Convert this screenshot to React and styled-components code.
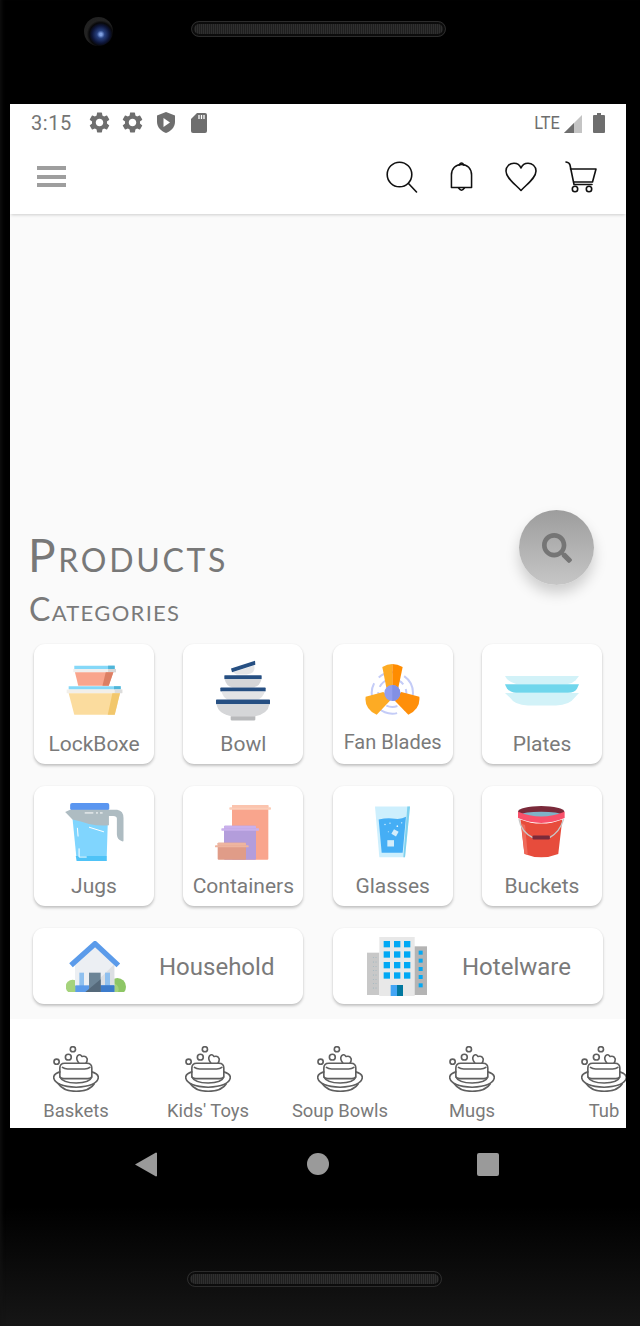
import React from 'react';
import styled, { createGlobalStyle } from 'styled-components';
import { MdSettings } from 'react-icons/md';
import { FaSearch } from 'react-icons/fa';

const Global = createGlobalStyle`
  html, body { margin: 0; padding: 0; background: #000; }
  * { box-sizing: border-box; }
`;

const Phone = styled.div`
  width: 640px; height: 1326px; display: flex; flex-direction: column;
  background: linear-gradient(180deg, #000 0 91%, #161616 100%);
  overflow: hidden; font-family: Roboto, "Liberation Sans", sans-serif;
  box-shadow: inset 4px 0 4px -3px #141414;
`;
const TopBezel = styled.div`
  height: 104px; flex: none; display: flex; align-items: flex-start; padding: 17px 0 0 84px; gap: 78px;
`;
const Camera = styled.div`
  width: 29px; height: 29px; border-radius: 50%;
  background: radial-gradient(circle at 58% 60%, #7f9fe0 0 5%, #27407f 16%, #0d1538 36%, #08080a 48%, #222 58%, #1f1f1f 100%);
`;
const Speaker = styled.div`
  width: 255px; height: 16px; border-radius: 8px; margin-top: ${p => p.$top || 0}px; border: 1px solid #2c2c2c;
  background: repeating-linear-gradient(90deg, #1f1f1f 0 1px, #2f2f2f 1px 2px);
  box-shadow: inset 0 0 0 2px #0c0c0c;
`;
const Screen = styled.div`
  width: 616px; height: 1024px; flex: none; margin-left: 10px; display: flex; flex-direction: column; background: #fafafa; overflow: hidden;
`;
const StatusBar = styled.div`
  height: 39px; flex: none; background: #fff; display: flex; align-items: center; padding: 0 21px 2px; color: #6e6e6e;
`;
const Clock = styled.span`
  font-size: 20px; width: 42px; letter-spacing: .6px; line-height: 1; margin-right: 14px; color: #757575;
`;
const StatusIcons = styled.div`
  display: flex; align-items: center; gap: ${p => p.$gap || 0}px;
`;
const Nudge = styled.span`
  display: flex; margin-left: ${p => p.$left}px;
`;
const Net = styled.span`
  font-size: 19px; margin-left: auto; margin-right: 4px; transform: scaleX(.86); transform-origin: right; color: #6e6e6e;
`;
const Header = styled.header`
  height: 71px; flex: none; background: #fff; display: flex; align-items: center; padding: 0 29px 4px 27px;
  box-shadow: 0 2px 3px -1px rgba(0,0,0,.18); position: relative; z-index: 2;
`;
const Burger = styled.div`
  width: 29px; display: flex; flex-direction: column; gap: 4.5px; margin-right: auto;
  & > i { display: block; height: 4px; background: #9e9e9e; }
`;
const HeaderIcons = styled.div`
  display: flex; align-items: center; gap: 0;
`;
const HeaderSlot = styled.div`
  width: ${p => p.$w}px; display: flex; justify-content: flex-start;
`;
const Main = styled.main`
  flex: 1; position: relative; background: #fafafa; padding: 319px 23px 15px;
`;
const Title = styled.h1`
  margin: 0 0 0 -5px; font: 400 46px/44px Lato, sans-serif; font-variant: small-caps; color: #787878; letter-spacing: 2.7px;
`;
const Subtitle = styled.h2`
  margin: 15px 0 18px -4px; font: 400 32px/34px Lato, sans-serif; font-variant: small-caps; color: #7a7a7a; letter-spacing: 1.3px;
`;
const Grid = styled.div`
  display: flex; flex-wrap: wrap; justify-content: space-between; row-gap: 22px; padding-left: 1px; width: 569px;
`;
const cardSurface = `background:#fff; border-radius: 11px; box-shadow: 0 2px 3px rgba(0,0,0,.22), 0 0 2px rgba(0,0,0,.05);`;
const Card = styled.div`
  ${cardSurface}
  width: 120px; height: 120px; display: flex; flex-direction: column; align-items: center;
`;
const IconSlot = styled.div`
  height: 88px; padding-top: 4px; display: flex; align-items: center; justify-content: center; flex: none; width: 100%;
`;
const CardLabel = styled.div`
  height: 24px; font-size: ${p => p.$compact ? 20 : 21}px; line-height: 24px; color: #7a7a7a; white-space: nowrap;
  margin-top: ${p => p.$compact ? -2 : 0}px;
`;
const WideRow = styled.div`
  display: flex; gap: 30px; margin-top: 22px;
`;
const WideCard = styled.div`
  ${cardSurface}
  width: 270px; height: 76px; display: flex; align-items: center; padding-left: ${p => p.$pad}px;
`;
const WideLabel = styled.div`
  font-size: 24px; color: #7a7a7a; margin: 2px 0 0 ${p => p.$gap}px; white-space: nowrap;
`;
const Fab = styled.button`
  position: absolute; left: 509px; top: 296px; width: 75px; height: 75px; border: 0; border-radius: 50%; padding: 0;
  background: linear-gradient(180deg, #9d9d9d, #c6c6c6); color: #757575;
  box-shadow: 0 8px 14px rgba(0,0,0,.18); display: flex; align-items: center; justify-content: center;
`;
const Shelf = styled.nav`
  height: 109px; flex: none; background: #fff; display: flex; overflow: hidden;
`;
const ShelfItem = styled.div`
  width: 132px; flex: none; display: flex; flex-direction: column; align-items: center; padding-top: 27px;
`;
const ShelfLabel = styled.div`
  font-size: 18.4px; line-height: 20px; margin-top: 9px; color: #7a7a7a; white-space: nowrap;
`;
const NavBar = styled.div`
  height: 72px; flex: none; display: flex; align-items: center; padding-left: 135px;
`;
const NavCircle = styled.div`
  width: 22px; height: 22px; border-radius: 50%; background: #9a9a9a; margin-left: 150px; flex: none;
`;
const NavSquare = styled.div`
  width: 22px; height: 23px; border-radius: 2px; background: #9a9a9a; margin-left: 148px; flex: none;
`;
const BottomBezel = styled.div`
  flex: 1; padding: 71px 0 0 187px;
`;

const Back = () => (
  <svg width="22" height="25" viewBox="0 0 22 25"><path d="M21 0.5 L22 1 V24 L21 24.5 L0 12.5 Z" fill="#9a9a9a" /></svg>
);

const Shield = () => (
  <svg width="18" height="21" viewBox="0 0 18 21">
    <path d="M9 0 L18 3.5 V10 C18 15 14 19 9 21 C4 19 0 15 0 10 V3.5 Z" fill="#6e6e6e" />
    <path d="M6.5 6 L13 10.5 L6.5 15 Z" fill="#fff" />
  </svg>
);
const Sd = () => (
  <svg width="16" height="20" viewBox="0 0 16 20">
    <path d="M6 0 H14 Q16 0 16 2 V18 Q16 20 14 20 H2 Q0 20 0 18 V6 Z" fill="#6e6e6e" />
    <path d="M8 2 V6 M10.5 2 V6 M13 2 V6" stroke="#fff" strokeWidth="1.3" />
  </svg>
);
const Signal = () => (
  <svg width="18" height="18" viewBox="0 0 18 18" style={{ marginTop: 2 }}>
    <path d="M18 0 V18 H0 Z" fill="#c4c4c4" />
    <path d="M10 8 V18 H0 Z" fill="#6e6e6e" />
  </svg>
);
const Battery = () => (
  <svg width="12" height="20" viewBox="0 0 12 20">
    <path d="M4 0 H8 V2 H11 Q12 2 12 3 V19 Q12 20 11 20 H1 Q0 20 0 19 V3 Q0 2 1 2 H4 Z" fill="#6e6e6e" />
  </svg>
);

const line = { fill: 'none', stroke: '#111', strokeWidth: 1.6, strokeLinecap: 'round', strokeLinejoin: 'round' };
const SearchLine = () => (
  <svg width="32" height="32" viewBox="0 0 32 32" {...line}>
    <circle cx="13.5" cy="13.5" r="12.3" /><path d="M22.5 22.5 L30.5 31" />
  </svg>
);
const Bell = () => (
  <svg width="23" height="32" viewBox="0 0 24 32" {...line}>
    <path d="M1.5 27 V14 C1.5 7 6 3 12 3 C18 3 22.5 7 22.5 14 V27 Z" />
    <path d="M9.5 3.5 Q12 -0.5 14.5 3.5 M9 27.5 Q12 32 15 27.5" />
  </svg>
);
const Heart = () => (
  <svg width="32" height="30" viewBox="0 0 32 30" {...line}>
    <path d="M16 28.5 C10 22 1 16 1 9 C1 4 5 1.2 9 1.2 C12 1.2 14.8 3 16 6 C17.2 3 20 1.2 23 1.2 C27 1.2 31 4 31 9 C31 16 22 22 16 28.5 Z" />
  </svg>
);
const Cart = () => (
  <svg width="32" height="32" viewBox="0 0 32 32" {...line}>
    <path d="M1 1 Q4.5 1.5 5 4 L9 23.5 H27" />
    <path d="M5.5 8 H31 L27.5 21 H9" />
    <circle cx="10" cy="28" r="2.7" /><circle cx="24" cy="28" r="2.7" />
  </svg>
);

const LockBox = () => (
  <svg width="57" height="51" viewBox="135 495 172 154">
    <path d="M160 497 H282 V507 H160 Z" fill="#85d8f8" /><path d="M262 497 H282 V507 H262 Z" fill="#50b5d8" />
    <path d="M157 507 H286 V517 H157 Z" fill="#efefef" /><path d="M262 507 H286 V517 H262 Z" fill="#d6d6d6" />
    <path d="M162 517 H278 L264 558 H172 Z" fill="#f9a58d" /><path d="M255 517 H278 L264 558 H245 Z" fill="#dc7f64" />
    <path d="M143 559 H300 V569 H143 Z" fill="#85d8f8" /><path d="M280 559 H300 V569 H280 Z" fill="#50b5d8" />
    <path d="M137 569 H305 V580 H137 Z" fill="#f2efe9" /><path d="M282 569 H305 V580 H282 Z" fill="#dcdcdc" />
    <path d="M143 580 H298 L282 645 H160 Z" fill="#fbdc9e" /><path d="M275 580 H298 L282 645 H261 Z" fill="#f2c76c" />
  </svg>
);
const Bowl = () => (
  <svg width="54" height="61" viewBox="588 480 162 182">
    <path d="M638 516 L703 496 Q708 520 680 523 H650 Z" fill="#e4e5e7" />
    <path d="M633 505 L705 482 L706 494 L636 516 Z" fill="#264f82" />
    <rect x="613" y="525" width="112" height="12" rx="2" fill="#264f82" />
    <path d="M614 537 H724 Q720 558 700 562 H638 Q618 558 614 537" fill="#d5d6d8" />
    <rect x="601" y="562" width="136" height="12" rx="2" fill="#264f82" />
    <path d="M604 574 H735 Q728 592 715 598 H622 Q610 592 604 574" fill="#e3e4e6" />
    <rect x="588" y="598" width="162" height="14" rx="2" fill="#264f82" />
    <path d="M590 612 H748 Q745 640 705 648 H635 Q593 640 590 612" fill="#d5d6d8" />
    <path d="M632 648 H706 V658 Q706 661 702 661 H636 Q632 661 632 658 Z" fill="#b8b9bb" />
  </svg>
);
const Fan = () => (
  <svg width="55" height="52" viewBox="135 494 165 156">
    <g fill="none" stroke="#c4ccf7" strokeWidth="6">
      <circle cx="217" cy="581" r="62" strokeDasharray="60 22" />
      <circle cx="217" cy="581" r="42" strokeDasharray="34 16" />
    </g>
    <path d="M187 503 Q202 494 217 494 V565 H199 Z" fill="#fdab24" />
    <path d="M248 503 Q232 494 217 494 V565 H235 Z" fill="#ff8c00" />
    <path d="M244 578 L298 592 Q302 628 265 646 L220 600 Z" fill="#ff8f0a" />
    <path d="M190 578 L137 592 Q132 628 170 646 L214 600 Z" fill="#fdab24" />
    <circle cx="217" cy="581" r="24" fill="#929eee" />
    <path d="M217 557 A24 24 0 0 1 217 605 Z" fill="#8290e4" />
  </svg>
);
const Plates = () => (
  <svg width="74" height="31" viewBox="557 525 221 91">
    <path d="M557 527 H778 L768 540 Q758 550 745 551 H590 Q565 545 557 527 Z" fill="#d2f2f8" />
    <path d="M557 552 H778 L772 565 Q765 577 745 577 H590 Q565 577 557 552 Z" fill="#70d6ec" />
    <path d="M557 578 H778 L762 595 Q750 613 710 615 H625 Q585 613 575 595 Z" fill="#d2f2f8" />
  </svg>
);
const Jug = () => (
  <svg width="59" height="59" viewBox="133 85 177 178">
    <rect x="148" y="85" width="118" height="22" rx="6" fill="#5a96f0" />
    <path d="M155 130 H262 L258 260 H168 Z" fill="#80d5fe" />
    <path d="M165 245 H258 V260 H168 Z" fill="#4fc3f7" />
    <path d="M133 112 L148 105 H290 Q309 108 309 130 V198 Q309 203 303 200 Q290 195 289 180 V132 Q289 124 278 124 H265 V152 Q235 155 205 148 Q180 140 155 135 Z" fill="#aebcc2" />
    <path d="M192 115 H218 M226 115 H232 M238 115 H246 M205 158 L250 172 M170 160 L172 186 M175 222 V248 H198" stroke="#fff" strokeWidth="3" fill="none" />
  </svg>
);
const Containers = () => (
  <svg width="56" height="55" viewBox="585 91 168 165">
    <rect x="636" y="91" width="109" height="164" rx="3" fill="#f9a58d" />
    <rect x="636" y="91" width="109" height="7" fill="#fbc4ae" />
    <rect x="628" y="98" width="125" height="7" rx="2" fill="#fbcdb8" />
    <rect x="612" y="153" width="96" height="102" rx="3" fill="#b39ddb" />
    <rect x="612" y="153" width="96" height="8" rx="2" fill="#c9b0ec" />
    <rect x="604" y="161" width="113" height="7" rx="2" fill="#c9b0ec" />
    <rect x="593" y="204" width="85" height="51" rx="3" fill="#e09c88" />
    <rect x="593" y="204" width="85" height="8" rx="2" fill="#eeb5a0" />
    <rect x="585" y="212" width="101" height="6" rx="2" fill="#eeb5a0" />
  </svg>
);
const Glass = () => (
  <svg width="35" height="52" viewBox="165 95 105 155">
    <path d="M165 96 H270 L255 248 H178 Z" fill="#cdeffd" />
    <path d="M262 96 H270 L255 248 H250 Z" fill="#7fd1ee" />
    <path d="M176 135 Q205 128 225 133 Q245 135 258 127 L248 235 H185 Z" fill="#45aef5" />
    <rect x="202" y="197" width="20" height="19" fill="#d3edfb" />
    <rect x="217" y="167" width="16" height="16" fill="#d3edfb" transform="rotate(30 225 175)" />
    <g fill="#e6f6ff"><circle cx="195" cy="150" r="2" /><circle cx="210" cy="146" r="2" /><circle cx="232" cy="155" r="2.5" /><circle cx="245" cy="145" r="2" /><circle cx="205" cy="172" r="1.5" /></g>
  </svg>
);
const Bucket = () => (
  <svg width="47" height="53" viewBox="597 95 140 158">
    <ellipse cx="666" cy="112" rx="69" ry="17" fill="#7a2a3a" />
    <ellipse cx="666" cy="121" rx="59" ry="9" fill="#7fb3c8" />
    <path d="M604 135 Q666 160 729 135 L717 238 Q666 258 616 238 Z" fill="#e74c3c" />
    <path d="M606 145 Q612 150 618 152 L626 240 L616 236 Z" fill="#ef6a5b" />
    <path d="M597 112 Q666 140 736 112 V131 Q666 160 597 131 Z" fill="#f9506a" />
    <path d="M600 134 Q606 172 642 190 M733 134 Q722 172 690 190" stroke="#c8c8c8" strokeWidth="4" fill="none" />
    <rect x="640" y="183" width="52" height="12" rx="4" fill="#7a2a3a" />
  </svg>
);
const House = () => (
  <svg width="60" height="51" viewBox="138 495 180 153">
    <defs><clipPath id="hb"><rect x="138" y="495" width="180" height="153" /></clipPath></defs>
    <g clipPath="url(#hb)">
      <circle cx="292" cy="632" r="26" fill="#8dc665" />
      <circle cx="158" cy="632" r="21" fill="#a5d37c" />
      <circle cx="278" cy="640" r="18" fill="#a5d37c" />
      <path d="M165 565 L225 512 L283 565 V630 H165 Z" fill="#eceff3" />
      <path d="M283 565 V630 H216 Z" fill="#dcdfe3" />
      <path d="M153 568 L225 503 L295 568" fill="none" stroke="#5b9bea" strokeWidth="16" strokeLinejoin="round" />
      <rect x="178" y="590" width="14" height="40" fill="#8fc0ef" />
      <rect x="255" y="590" width="15" height="40" fill="#8fc0ef" />
      <rect x="166" y="628" width="117" height="20" fill="#5b9bea" />
      <rect x="240" y="628" width="43" height="20" fill="#3c7bcb" />
      <path d="M207 590 H242 V648 H207 Z" fill="#6c8496" />
      <path d="M242 610 V648 H196 Z" fill="#55697a" />
    </g>
  </svg>
);
const Hotel = () => {
  const cols = [191, 222, 252];
  const rows = [495, 526, 558, 589];
  const side = [524, 548, 573, 597, 622];
  return (
    <svg width="60" height="59" viewBox="141 483 180 177">
      <rect x="141" y="530" width="37" height="127" fill="#c8c8c8" />
      {[160, 168].map(x => [545, 558, 571, 584, 597, 610, 623, 636].map(y => <circle key={`${x}-${y}`} cx={x} cy={y} r="1.3" fill="#7aa7b8" />))}
      <rect x="178" y="483" width="106" height="177" fill="#e8e8e8" />
      <rect x="284" y="511" width="37" height="146" fill="#b4b4b4" />
      {cols.map(x => rows.map(y => <rect key={`${x}:${y}`} x={x} y={y} width="19" height="19" fill="#03a9f4" />))}
      {side.map(y => <rect key={y} x="296" y={y} width="12" height="12" fill="#03a9f4" />)}
      <rect x="212" y="627" width="19" height="33" fill="#42a5f5" />
      <rect x="231" y="627" width="18" height="33" fill="#01789f" />
    </svg>
  );
};
const Soap = () => (
  <svg width="46" height="46" viewBox="71 31 141 144" preserveAspectRatio="none" fill="none" stroke="#5f5f5f" strokeWidth="5" strokeLinecap="round" strokeLinejoin="round">
    <circle cx="132" cy="41" r="8" />
    <circle cx="118" cy="66" r="9" />
    <circle cx="82" cy="80" r="8" />
    <path d="M150 84 Q140 70 146 62 Q154 54 160 64 Q172 60 176 72 Q176 80 172 85" />
    <path d="M92 125 V100 Q92 85 107 85 H175 Q190 85 190 100 V125 Q190 132 178 133 H104 Q92 132 92 125 Z" />
    <path d="M100 98 Q106 103 116 103 H168 Q178 103 184 98" />
    <path d="M92 112 Q73 118 73 130 Q78 157 142 160 Q206 157 210 130 Q210 118 190 112" />
    <path d="M88 150 Q102 172 142 173 Q184 172 197 150" />
    <path d="M92 128 Q100 146 142 147 Q184 146 190 128" />
  </svg>
);

const categories = [
  { label: 'LockBoxe', Art: LockBox }, { label: 'Bowl', Art: Bowl },
  { label: 'Fan Blades', Art: Fan, compact: true }, { label: 'Plates', Art: Plates },
  { label: 'Jugs', Art: Jug }, { label: 'Containers', Art: Containers },
  { label: 'Glasses', Art: Glass }, { label: 'Buckets', Art: Bucket },
];
const shelf = ['Baskets', "Kids' Toys", 'Soup Bowls', 'Mugs', 'Tub'];

export default function App() {
  return (
    <Phone>
      <Global />
      <TopBezel>
        <Camera />
        <Speaker $top={4} />
      </TopBezel>
      <Screen>
        <StatusBar>
          <Clock>3:15</Clock>
          <StatusIcons $gap={8}>
            <MdSettings size={25} />
            <MdSettings size={25} />
            <Nudge $left={4}><Shield /></Nudge>
            <Nudge $left={8}><Sd /></Nudge>
          </StatusIcons>
          <Net>LTE</Net>
          <StatusIcons $gap={11}>
            <Signal />
            <Battery />
          </StatusIcons>
        </StatusBar>
        <Header>
          <Burger><i /><i /><i /></Burger>
          <HeaderIcons>
            <HeaderSlot $w={64}><SearchLine /></HeaderSlot>
            <HeaderSlot $w={55}><Bell /></HeaderSlot>
            <HeaderSlot $w={60}><Heart /></HeaderSlot>
            <HeaderSlot $w={32}><Cart /></HeaderSlot>
          </HeaderIcons>
        </Header>
        <Main>
          <Title>Products</Title>
          <Subtitle>Categories</Subtitle>
          <Grid>
            {categories.map(({ label, Art, compact }) => (
              <Card key={label}>
                <IconSlot><Art /></IconSlot>
                <CardLabel $compact={compact}>{label}</CardLabel>
              </Card>
            ))}
          </Grid>
          <WideRow>
            <WideCard $pad={33}><House /><WideLabel $gap={33}>Household</WideLabel></WideCard>
            <WideCard $pad={34}><Hotel /><WideLabel $gap={35}>Hotelware</WideLabel></WideCard>
          </WideRow>
          <Fab aria-label="Search"><FaSearch size={30} /></Fab>
        </Main>
        <Shelf>
          {shelf.map(name => (
            <ShelfItem key={name}>
              <Soap />
              <ShelfLabel>{name}</ShelfLabel>
            </ShelfItem>
          ))}
        </Shelf>
      </Screen>
      <NavBar>
        <Back />
        <NavCircle />
        <NavSquare />
      </NavBar>
      <BottomBezel>
        <Speaker />
      </BottomBezel>
    </Phone>
  );
}
